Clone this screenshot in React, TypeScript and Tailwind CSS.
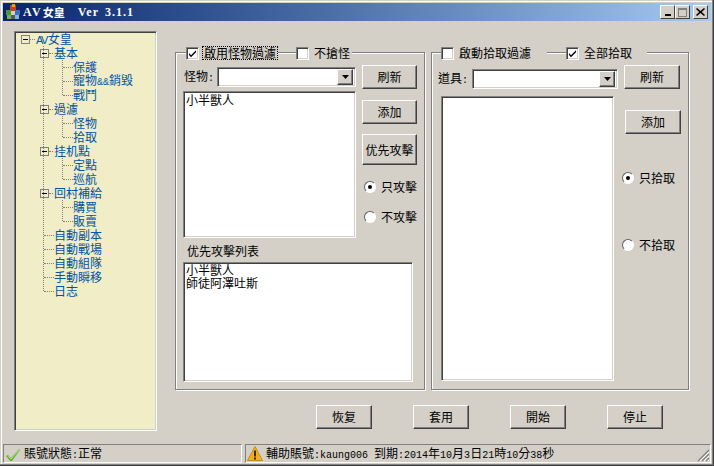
import type { ReactNode } from "react";

const cjk = "font-['Noto_Sans_CJK_TC','Liberation_Sans',sans-serif]";

// half-width latin text next to 12px CJK, as the old bitmap font has it
function M({ children }: { children: ReactNode }) {
  return <span className="font-['Liberation_Mono',monospace] text-[10px]">{children}</span>;
}

function Btn({ label, className = "" }: { label: string; className?: string }) {
  return (
    <div
      className={`flex items-center justify-center border border-t-white border-l-white border-r-[#404040] border-b-[#404040] bg-[#d4d0c8] text-[12px] leading-none text-black shadow-[inset_-1px_-1px_0_#808080] ${className}`}
    >
      {label}
    </div>
  );
}

function Sunken({ className = "", children }: { className?: string; children?: ReactNode }) {
  return (
    <div
      className={`border border-t-[#808080] border-l-[#808080] border-r-white border-b-white shadow-[inset_1px_1px_0_#404040,inset_-1px_-1px_0_#d4d0c8] ${className}`}
    >
      {children}
    </div>
  );
}

function Combo({ className = "" }: { className?: string }) {
  return (
    <Sunken className={`flex items-center justify-end bg-white pr-[2px] ${className}`}>
      <div className="flex h-[16px] w-[16px] items-center justify-center border border-t-white border-l-white border-r-[#404040] border-b-[#404040] bg-[#d4d0c8] shadow-[inset_-1px_-1px_0_#808080]">
        <svg width="7" height="4" viewBox="0 0 7 4">
          <path d="M0 0h7L3.5 4z" fill="#000" />
        </svg>
      </div>
    </Sunken>
  );
}

function Check({ checked = false }: { checked?: boolean }) {
  return (
    <Sunken className="flex h-[13px] w-[13px] shrink-0 items-center justify-center bg-white">
      {checked && (
        <svg width="9" height="9" viewBox="0 0 9 9">
          <path d="M1 4l2 2.2L8 1.2v2L3 8.2 1 6z" fill="#000" />
        </svg>
      )}
    </Sunken>
  );
}

function Radio({ label, on = false, className = "" }: { label: string; on?: boolean; className?: string }) {
  return (
    <div className={`flex items-center text-[12px] leading-none ${className}`}>
      <div className="flex h-[12px] w-[12px] items-center justify-center rounded-full border border-t-[#606060] border-l-[#606060] border-r-white border-b-white bg-white">
        {on && <div className="h-[4px] w-[4px] rounded-full bg-black" />}
      </div>
      <span className="ml-[5px]">{label}</span>
    </div>
  );
}

function Box({ className = "" }: { className?: string }) {
  return (
    <div className={`flex h-[9px] w-[9px] shrink-0 items-center justify-center border border-[#808080] bg-[#f1edc6] ${className}`}>
      <div className="h-[1px] w-[5px] bg-black" />
    </div>
  );
}

function Leaf({ label }: { label: ReactNode }) {
  return (
    <div className="flex h-[14px] items-center">
      <span className="ml-[1px] w-[10px] border-t border-dotted border-[#808080]" />
      <span className="whitespace-nowrap text-[12px] leading-none">{label}</span>
    </div>
  );
}

function Branch({ label, items }: { label: string; items: ReactNode[] }) {
  return (
    <>
      <div className="flex h-[14px] items-center">
        <Box className="-ml-[3px]" />
        <span className="mr-[1px] w-[4px] border-t border-dotted border-[#808080]" />
        <span className="whitespace-nowrap text-[12px] leading-none">{label}</span>
      </div>
      <div className="relative ml-[19px]">
        <span className="absolute top-0 bottom-[7px] left-0 border-l border-dotted border-[#808080]" />
        {items.map((t, i) => (
          <Leaf key={i} label={t} />
        ))}
      </div>
    </>
  );
}

function Tree() {
  return (
    <Sunken className="h-[400px] w-[143px] shrink-0 bg-[#f1edc6] pl-[6px] text-[#0054a6]">
      <div className="flex h-[14px] items-center">
        <Box />
        <span className="w-[5px] border-t border-dotted border-[#808080]" />
        <span className="ml-[1px] text-[12px] leading-none">
          <span className="font-['Liberation_Sans',sans-serif] text-[11px] tracking-[-1.500px]">AV</span>
          <span className="ml-[1px]">女皇</span>
        </span>
      </div>
      <div className="relative ml-[22px]">
        <span className="absolute top-0 bottom-[7px] left-0 border-l border-dotted border-[#808080]" />
        <Branch
          label="基本"
          items={[
            "保護",
            <>
              寵物<M>&&</M>銷毀
            </>,
            "戰鬥",
          ]}
        />
        <Branch label="過濾" items={["怪物", "拾取"]} />
        <Branch label="挂机點" items={["定點", "巡航"]} />
        <Branch label="回村補給" items={["購買", "販賣"]} />
        {["自動副本", "自動戰場", "自動組隊", "手動瞬移", "日志"].map((t) => (
          <Leaf key={t} label={t} />
        ))}
      </div>
    </Sunken>
  );
}

function Group({ className = "", legendLeft = "left-[10px]", legend, children }: { className?: string; legendLeft?: string; legend: ReactNode; children: ReactNode }) {
  return (
    <div className={`relative h-[338px] border border-[#808080] shadow-[1px_1px_0_#fff,inset_1px_1px_0_#fff] ${className}`}>
      <div className={`absolute -top-[7px] flex h-[14px] items-center text-[12px] leading-none ${legendLeft}`}>{legend}</div>
      {children}
    </div>
  );
}

function LegendItem({ label, checked, focus, className = "" }: { label: string; checked?: boolean; focus?: boolean; className?: string }) {
  return (
    <div className={`flex h-[14px] items-center bg-[#d4d0c8] ${className}`}>
      <Check checked={checked} />
      <span className={`ml-[3px] whitespace-nowrap ${focus ? "border border-dotted border-black px-[1px]" : "px-[2px]"}`}>{label}</span>
    </div>
  );
}

function AppIcon() {
  return (
    <svg width="16" height="16" viewBox="0 0 16 16" className="shrink-0">
      <rect x="5" y="1" width="6" height="6" fill="#c8402a" />
      <rect x="7" y="0" width="3" height="3" fill="#e8a020" />
      <rect x="1" y="6" width="5" height="5" fill="#4a9a3a" />
      <rect x="6" y="7" width="4" height="4" fill="#d8d0b0" />
      <rect x="10" y="6" width="5" height="5" fill="#3a70c0" />
      <rect x="2" y="11" width="4" height="4" fill="#78b060" />
      <rect x="6" y="11" width="4" height="4" fill="#5a5a5a" />
      <rect x="10" y="11" width="4" height="4" fill="#80b8e0" />
    </svg>
  );
}

function CapBtn({ children, className = "" }: { children?: ReactNode; className?: string }) {
  return (
    <div className={`flex h-[14px] w-[15px] items-center justify-center border border-t-white border-l-white border-r-[#404040] border-b-[#404040] bg-[#d4d0c8] ${className}`}>
      {children}
    </div>
  );
}

export default function App() {
  return (
    <div className={`flex h-[466px] w-[714px] flex-col overflow-hidden bg-[#d4d0c8] p-[3px] text-black shadow-[inset_-1px_-1px_0_#404040,inset_-2px_-2px_0_#808080,inset_1px_1px_0_#d4d0c8,inset_2px_2px_0_#fff] ${cjk}`}>
      {/* title bar */}
      <div className="flex h-[18px] shrink-0 items-center bg-gradient-to-r from-[#0a246a] to-[#a6caf0] pr-[3px] pl-[2px]">
        <AppIcon />
        <div className="ml-[2px] flex items-center whitespace-pre font-['Liberation_Serif',serif] text-[12px] font-bold leading-none text-white">
          <span className="tracking-[2px]">AV</span>
          <span className="font-['Noto_Sans_CJK_TC',sans-serif] text-[11px]">女皇</span>
          <span className="ml-[13px] tracking-[1px]">Ver</span>
          <span className="ml-[6px] tracking-[1px]">3.1.1</span>
        </div>
        <div className="ml-auto flex items-center">
          <CapBtn>
            <div className="mt-[6px] h-[2px] w-[6px] bg-black" />
          </CapBtn>
          <CapBtn>
            <div className="h-[9px] w-[9px] border border-t-2 border-[#808080]" />
          </CapBtn>
          <CapBtn className="ml-[3px]">
            <svg width="9" height="8" viewBox="0 0 9 8">
              <path d="M1 0l3.5 3L8 0l1 1-3.200 3L9 7l-1 1-3.500-3L1 8 0 7l3.200-3L0 1z" fill="#000" />
            </svg>
          </CapBtn>
        </div>
      </div>

      {/* main */}
      <div className="flex min-h-0 flex-1 gap-[18px] pt-[10px] pl-[11px]">
        <Tree />
        <div className="pt-[21px]">
          <div className="flex gap-[6px]">
            <Group
              className="w-[250px] px-[7px] pt-[12px]"
              legend={
                <>
                  <LegendItem label="啟用怪物過濾" checked focus />
                  <LegendItem label="不搶怪" className="ml-[18px]" />
                </>
              }
            >
              <div className="flex gap-[6px]">
                <div className="w-[173px] pt-[2px]">
                  <div className="flex items-center">
                    <span className="ml-[1px] w-[33px] text-[12px] leading-none">
                      怪物<M>:</M>
                    </span>
                    <Combo className="h-[20px] flex-1" />
                  </div>
                  <Sunken className="mt-[4px] h-[147px] bg-white px-[2px] pt-[1px] text-[12px] leading-[13px]">小半獸人</Sunken>
                </div>
                <div className="w-[55px]">
                  <Btn label="刷新" className="h-[24px]" />
                  <Btn label="添加" className="mt-[11px] h-[24px]" />
                  <Btn label="优先攻擊" className="mt-[10px] h-[31px]" />
                  <Radio label="只攻擊" on className="mt-[16px] ml-[2px]" />
                  <Radio label="不攻擊" className="mt-[18px] ml-[2px]" />
                </div>
              </div>
              <div className="mt-[6px] ml-[4px] text-[12px] leading-[13px]">优先攻擊列表</div>
              <Sunken className="mt-[5px] h-[120px] w-[230px] bg-white px-[2px] text-[12px] leading-[13px]">
                <div>小半獸人</div>
                <div>師徒阿澤吐斯</div>
              </Sunken>
            </Group>

            <Group
              className="w-[258px] pt-[12px] pl-[6px]"
              legendLeft="left-[9px]"
              legend={
                <>
                  <LegendItem label="啟動拾取過濾" className="pr-[14px]" />
                  <LegendItem label="全部拾取" checked className="ml-[19px] pr-[13px]" />
                </>
              }
            >
              <div className="flex">
                <div className="w-[186px] pt-[4px]">
                  <div className="flex items-center">
                    <span className="w-[34px] text-[12px] leading-none">
                      道具<M>:</M>
                    </span>
                    <Combo className="h-[20px] w-[146px]" />
                  </div>
                  <Sunken className="mt-[7px] ml-[3px] h-[285px] w-[173px] bg-white" />
                </div>
                <div className="w-[57px]">
                  <Btn label="刷新" className="h-[24px] w-[56px]" />
                  <Btn label="添加" className="mt-[21px] ml-[1px] h-[24px] w-[56px]" />
                  <Radio label="只拾取" on className="mt-[38px] -ml-[2px]" />
                  <Radio label="不拾取" className="mt-[55px] -ml-[2px]" />
                </div>
              </div>
            </Group>
          </div>

          <div className="mt-[15px] flex gap-[41px] pl-[141px]">
            {["恢复", "套用", "開始", "停止"].map((t) => (
              <Btn key={t} label={t} className="h-[24px] w-[56px]" />
            ))}
          </div>
        </div>
      </div>

      {/* status bar */}
      <div className="flex h-[19px] shrink-0 gap-[3px] text-[12px] leading-none">
        <div className="flex w-[239px] items-center border border-t-[#808080] border-l-[#808080] border-r-white border-b-white">
          <svg width="16" height="14" viewBox="0 0 16 14" className="mt-[2px] ml-[1px] shrink-0">
            <path d="M1 8l2-1 3 3 8-9 1 1-8 11H5z" fill="#6cb23c" />
            <path d="M3 8l3 3 8-9" fill="none" stroke="#a8dc70" strokeWidth="1" />
          </svg>
          <span className="ml-[3px] whitespace-pre">
            賬號狀態<M>:</M>正常
          </span>
        </div>
        <div className="relative flex flex-1 items-center border border-t-[#808080] border-l-[#808080] border-r-white border-b-white">
          <svg width="16" height="15" viewBox="0 0 16 15" className="ml-[1px] shrink-0">
            <path d="M8 0.500L15.500 14.500H0.500z" fill="#f2b01e" stroke="#c98a10" strokeWidth="1" />
            <rect x="7" y="4.500" width="2" height="6" fill="#3a2a00" />
            <rect x="7" y="11.500" width="2" height="2" fill="#3a2a00" />
          </svg>
          <span className="ml-[3px] whitespace-pre">
            輔助賬號<M>:kaung006 </M>到期<M>:2014</M>年<M>10</M>月<M>3</M>日<M>21</M>時<M>10</M>分<M>38</M>秒
          </span>
          <svg width="13" height="13" viewBox="0 0 13 13" className="absolute right-0 bottom-0">
            <path d="M12 1L1 12M12 5L5 12M12 9L9 12" stroke="#808080" strokeWidth="1.200" />
            <path d="M12 3L3 12M12 7L7 12M12 11L11 12" stroke="#fff" strokeWidth="1" />
          </svg>
        </div>
      </div>
    </div>
  );
}
